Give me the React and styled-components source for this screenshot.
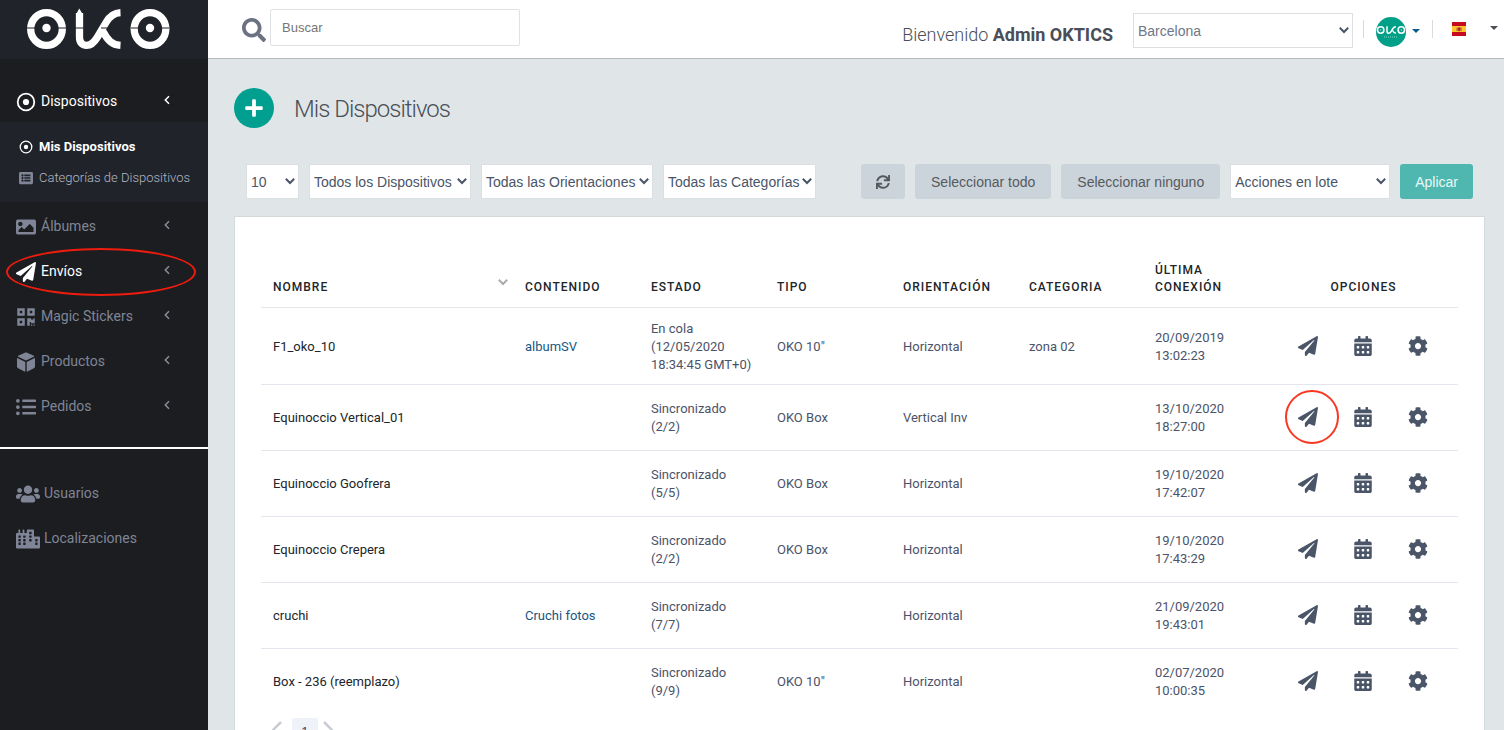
import React from 'react';
import styled, { createGlobalStyle, css } from 'styled-components';
import {
  FaSearch,
  FaImage,
  FaPaperPlane,
  FaQrcode,
  FaListUl,
  FaUsers,
  FaCity,
  FaSync,
  FaCalendarAlt,
  FaCog,
  FaPlus,
  FaListAlt
} from 'react-icons/fa';

const GlobalStyle = createGlobalStyle`
  * {
    box-sizing: border-box;
  }

  body {
    margin: 0;
    background: #e0e6e8;
    color: #4b5369;
    font-family: Roboto, "Liberation Sans", sans-serif;
    font-size: 13px;
    overflow: hidden;
  }

  a {
    color: inherit;
    text-decoration: none;
  }

  button, input, select {
    font-family: "Liberation Sans", Arial, sans-serif;
    font-size: 14px;
  }
`;

const Page = styled.div`
  display: flex;
  height: 100vh;
  overflow: hidden;
`;

const SidebarContainer = styled.aside`
  width: 208px;
  flex: none;
  background: #1c1d20;
`;

const LogoLink = styled.a`
  display: flex;
  justify-content: center;
  height: 59px;
  padding: 8px 11px 0 0;
  background: #20232a;

  svg {
    color: #ffffff;
  }
`;

const NavList = styled.ul`
  list-style: none;
  margin: 0;
  padding: ${(props) => props.$top} 0 19px;
  border-bottom: ${(props) => (props.$divided ? '2px solid #ffffff' : 'none')};
`;

const NavItem = styled.a`
  display: flex;
  align-items: center;
  gap: ${(props) => (props.$wide ? '4px' : '5px')};
  height: 45px;
  padding: 0 38px 0 16px;
  color: ${(props) => (props.$active ? '#ffffff' : '#7f8596')};
  font-size: 14px;

  > svg:first-child {
    width: ${(props) => (props.$wide ? '24px' : '20px')};
    height: ${(props) => (props.$wide ? '24px' : '20px')};
    margin-top: 2px;
  }
`;

const Arrow = styled.svg`
  margin: 0 0 1px auto;
  color: ${(props) => (props.$bright ? '#ffffff' : '#8b8e96')};
`;

const SubMenu = styled.ul`
  list-style: none;
  margin: -1px 0 1px;
  padding: 9px 0;
  background: #20232a;
`;

const SubItem = styled.a`
  display: flex;
  align-items: center;
  height: 31px;
  padding-left: 19px;
  gap: 6px;
  font-size: 13px;
  font-weight: 300;
  color: #b3b7c2;

  svg {
    color: #7f8596;
    font-size: 14px;
  }

  ${(props) => props.$active && css`
    color: #ffffff;
    font-weight: 700;

    svg {
      color: #ffffff;
    }
  `}
`;

const Highlight = styled.span`
  position: absolute;
  pointer-events: none;
  border: 2px solid ${(props) => props.$color};
  border-radius: 50%;
`;

const MenuHighlight = styled(Highlight)`
  top: 0;
  left: 6px;
  right: 12px;
  height: 48px;
`;

const RowHighlight = styled(Highlight)`
  width: 54px;
  height: 54px;
  left: -13px;
  top: -17px;
`;

const NavEntry = styled.li`
  position: relative;
`;

const Main = styled.main`
  flex: 1;
  min-width: 0;
`;

const Header = styled.header`
  display: flex;
  align-items: center;
  height: 59px;
  padding: 3px 6px 0 34px;
  background: #ffffff;
  border-bottom: 1px solid #b5b8bb;
`;

const SearchForm = styled.form`
  display: flex;
  align-items: center;
  gap: 4px;
  margin: 0 auto 6px 0;

  svg {
    font-size: 24px;
    margin-top: 4px;
    color: #6d7283;
  }
`;

const SearchInput = styled.input`
  width: 250px;
  height: 37px;
  padding: 0 11px;
  border: 1px solid #dfe2e4;
  border-radius: 2px;
  color: #4b5369;
  font-size: 13px;

  &::placeholder {
    color: #757575;
  }
`;

const Welcome = styled.span`
  margin: 8px 20px 0 0;
  color: #4a4e57;
  font-size: 18px;
  font-weight: 300;

  strong {
    font-weight: 700;
  }
`;

const SelectBox = styled.span`
  position: relative;
  display: inline-flex;
  flex: none;
  width: ${(props) => props.$width};
  color: #4a5568;

  svg {
    position: absolute;
    right: 3px;
    top: 12px;
    pointer-events: none;
  }
`;

const Select = styled.select`
  appearance: none;
  width: 100%;
  height: 35px;
  padding: 0 4px;
  border: 1px solid #dcdfe1;
  border-radius: 0;
  background: #ffffff;
  color: ${(props) => (props.$muted ? '#6f7888' : '#4a5568')};
`;

const HeaderMenu = styled.button`
  display: flex;
  align-items: center;
  gap: ${(props) => props.$gap};
  height: 30px;
  padding: 0;
  border: none;
  background: none;
  color: ${(props) => props.$color};
`;

const AccountMenu = styled(HeaderMenu)`
  margin-top: 3px;
`;

const LanguageMenu = styled(HeaderMenu)`
  margin-bottom: 3px;
`;

const Separator = styled.span`
  width: 1px;
  height: 18px;
  margin: 0 ${(props) => props.$right} 3px ${(props) => props.$left};
  background: #d9dcde;
`;

const Content = styled.section`
  padding: 29px 19px 0 26px;
`;

const TitleRow = styled.div`
  display: flex;
  align-items: center;
  gap: 20px;

  h1 {
    margin: 2px 0 0;
    color: #4a4e57;
    font-size: 24px;
    font-weight: 300;
    letter-spacing: -1px;
  }
`;

const AddButton = styled.button`
  display: flex;
  align-items: center;
  justify-content: center;
  width: 40px;
  height: 40px;
  padding: 0;
  border: none;
  border-radius: 50%;
  background: #009f8f;
  color: #ffffff;

  svg {
    font-size: 20px;
  }
`;

const Toolbar = styled.div`
  display: flex;
  gap: 10px;
  margin: 36px 12px 17px 12px;
`;

const Batch = styled.div`
  display: flex;
  gap: 10px;
  margin-left: auto;
`;

const Button = styled.button`
  display: flex;
  align-items: center;
  height: 35px;
  padding: 0 ${(props) => (props.$text ? '16px' : '15px')};
  border: none;
  border-radius: 3px;
  background: ${(props) => (props.$primary ? '#4fb7b0' : '#cbd4da')};
  color: ${(props) => (props.$primary ? '#e9f7f6' : '#555a5f')};
`;

const Card = styled.div`
  padding: 30px 26px 40px;
  background: #ffffff;
  border: 1px solid #d4d9db;
`;

const Table = styled.table`
  width: 100%;
  border-collapse: collapse;
  table-layout: fixed;
`;

const Th = styled.th`
  height: 60px;
  padding: 0 ${(props) => (props.$sortable ? '4px' : '12px')} 11px 12px;
  border-bottom: 1px solid #e4e6ea;
  color: #212529;
  font-size: 12px;
  font-weight: 500;
  line-height: 17px;
  letter-spacing: 1px;
  text-align: ${(props) => (props.$center ? 'center' : 'left')};
  vertical-align: bottom;
`;

const SortLabel = styled.span`
  display: flex;
  justify-content: space-between;
  align-items: center;

  svg {
    margin-top: -10px;
    color: #a9abae;
  }
`;

const Td = styled.td`
  height: 66px;
  padding: 12px 12px 10px;
  color: ${(props) => (props.$strong ? '#212529' : '#4b5369')};
  font-size: 13px;
  line-height: 18px;

  tr:not(:last-child) > & {
    border-bottom: 1px solid #e4e6ed;
  }
`;

const ContentLink = styled.a`
  color: #175783;
`;

const Options = styled.div`
  display: flex;
  justify-content: center;
  gap: 35px;
  padding-bottom: 2px;
`;

const IconButton = styled.button`
  position: relative;
  display: flex;
  justify-content: center;
  width: 20px;
  padding: 0;
  border: none;
  background: none;
  color: #4a5568;
  font-size: 20px;
`;

const Pagination = styled.nav`
  display: flex;
  gap: 5px;
  margin: 4px 0 0 11px;
`;

const PageButton = styled.button`
  height: 27px;
  padding: 0;
  border: none;
  background: none;
  color: #c9ccd2;
`;

const CurrentPage = styled(PageButton)`
  width: 26px;
  margin-left: 5px;
  border-radius: 2px;
  background: #eff2f8;
  color: #4b5369;
`;

const DotCircle = ({ size = 20 }) => (
  <svg width={size} height={size} viewBox="0 0 20 20" fill="none" aria-hidden="true">
    <circle cx="10" cy="10" r="8.3" stroke="currentColor" strokeWidth="1.8" />
    <circle cx="10" cy="10" r="3.1" fill="currentColor" />
  </svg>
);

const Cube = () => (
  <svg width="20" height="20" viewBox="0 0 20 20" fill="currentColor" aria-hidden="true">
    <path d="M10 .5c.4 0 .8.1 1.200.300l6.600 3c.5.2.5.800 0 1L10 8.500 2.200 4.800c-.5-.2-.5-.8 0-1l6.600-3C9.200.6 9.600.5 10 .5z" />
    <path d="M1.300 6.100 9.300 9.900v9.300c0 .4-.4.600-.8.4l-6.400-3.400c-.7-.4-1.100-1-1.100-1.800V6.400c0-.2.1-.4.3-.3z" />
    <path d="m18.700 6.100-8 3.800v9.300c0 .4.4.6.8.4l6.400-3.400c.7-.4 1.100-1 1.100-1.800V6.400c0-.2-.1-.4-.3-.3z" />
  </svg>
);

const Chevron = () => (
  <svg width="12" height="10" viewBox="0 0 12 10" fill="none" aria-hidden="true">
    <path d="M1.8 2.8 6 7l4.2-4.2" stroke="currentColor" strokeWidth="2" />
  </svg>
);

const Caret = styled.svg.attrs({
  width: 8,
  height: 4,
  viewBox: '0 0 8 4',
  children: <path d="M0 0h8L4 4z" fill="currentColor" />
})`
  margin-bottom: 3px;
`;

const LogoMark = ({ width, height }) => (
  <svg width={width} height={height} viewBox="0 0 144 42" fill="none" role="img" aria-label="OKO">
    <g stroke="currentColor" strokeWidth="7.3">
      <ellipse cx="19.5" cy="21" rx="15.8" ry="16.4" />
      <ellipse cx="123" cy="21" rx="15.8" ry="16.4" />
      <path d="M52.500 5v24c0 5.500 2.500 8.400 7 8.400 4.500 0 8-3.400 11-8.400l8.500-14.500c3.500-6 7.500-9.500 14.500-9.800" />
      <path d="M76 23.500c4.500 8.500 9 13.400 17.500 13.900" />
    </g>
    <path d="M48.800 7 52.200.5 56.200 7z" fill="currentColor" />
    <circle cx="19.500" cy="20" r="4.200" fill="currentColor" />
    <circle cx="123" cy="20" r="4.200" fill="currentColor" />
    <path d="M0 20h10M29 20h10M48 20h9M74 20h9M104 20h10M132 20h10" stroke="#20232a" />
  </svg>
);

const Avatar = () => (
  <svg width="30" height="30" viewBox="0 0 30 30" fill="none" role="img" aria-label="Admin OKTICS">
    <circle cx="15" cy="15" r="15" fill="#00a088" />
    <g stroke="#ffffff" strokeWidth="1.5">
      <circle cx="4.700" cy="13" r="3.200" />
      <circle cx="25.300" cy="13" r="3.200" />
      <path d="M11 9.300v4.700c0 3 2.700 2.900 4.200.4l1.600-2.800c.7-1.200 1.600-1.900 3.100-1.900M16.500 13.500c.9 1.700 1.900 2.700 3.500 2.700" />
    </g>
    <path d="M4.200 13h1M24.800 13h1" stroke="#ffffff" />
    <path d="M8 20h14" stroke="#8fd6cb" strokeDasharray="1 1" />
  </svg>
);

const SpanishFlag = () => (
  <svg width="14" height="14" viewBox="0 0 14 14" role="img" aria-label="Español">
    <path d="M0 0h14v14H0z" fill="#c60b1e" />
    <path d="M0 4h14v6H0z" fill="#ffc42c" />
    <path d="M4.500 5.500h1V9h-1zM8.700 5.500h1V9h-1z" fill="#b56a45" />
    <path d="M5.500 6h3.200v2.200L7.100 9.500 5.500 8.200z" fill="#ad3030" />
    <path d="M6 5h2.300v1H6z" fill="#b56a45" />
  </svg>
);

const NavArrow = ({ bright }) => (
  <Arrow $bright={bright} width="6" height="10" viewBox="0 0 6 10" fill="none" aria-hidden="true">
    <path d="M5 1.300 1.300 5 5 8.700" stroke="currentColor" strokeWidth="1.500" />
  </Arrow>
);

const Dropdown = ({ label, value, width, muted }) => (
  <SelectBox $width={width}>
    <Select aria-label={label} $muted={muted} defaultValue={value}>
      <option>{value}</option>
    </Select>
    <Chevron />
  </SelectBox>
);

const sections = [
  { label: 'Álbumes', icon: FaImage },
  { label: 'Envíos', icon: FaPaperPlane, active: true, marked: true },
  { label: 'Magic Stickers', icon: FaQrcode },
  { label: 'Productos', icon: Cube },
  { label: 'Pedidos', icon: FaListUl }
];

const devices = [
  { name: 'F1_oko_10', content: 'albumSV', state: 'En cola (12/05/2020 18:34:45 GMT+0)', type: 'OKO 10"', orientation: 'Horizontal', category: 'zona 02', last: '20/09/2019 13:02:23' },
  { name: 'Equinoccio Vertical_01', state: 'Sincronizado (2/2)', type: 'OKO Box', orientation: 'Vertical Inv', last: '13/10/2020 18:27:00', marked: true },
  { name: 'Equinoccio Goofrera', state: 'Sincronizado (5/5)', type: 'OKO Box', orientation: 'Horizontal', last: '19/10/2020 17:42:07' },
  { name: 'Equinoccio Crepera', state: 'Sincronizado (2/2)', type: 'OKO Box', orientation: 'Horizontal', last: '19/10/2020 17:43:29' },
  { name: 'cruchi', content: 'Cruchi fotos', state: 'Sincronizado (7/7)', orientation: 'Horizontal', last: '21/09/2020 19:43:01' },
  { name: 'Box - 236 (reemplazo)', state: 'Sincronizado (9/9)', type: 'OKO 10"', orientation: 'Horizontal', last: '02/07/2020 10:00:35' }
];

const Sidebar = () => (
  <SidebarContainer>
    <LogoLink href="#">
      <LogoMark width={144} height={42} />
    </LogoLink>

    <NavList $top="19px" $divided>
      <li>
        <NavItem href="#" $active>
          <DotCircle />
          Dispositivos
          <NavArrow bright />
        </NavItem>
        <SubMenu>
          <li>
            <SubItem href="#" $active>
              <DotCircle size={14} />
              Mis Dispositivos
            </SubItem>
          </li>
          <li>
            <SubItem href="#">
              <FaListAlt />
              Categorías de Dispositivos
            </SubItem>
          </li>
        </SubMenu>
      </li>
      {sections.map(({ label, icon: Icon, active, marked }) => (
        <NavEntry key={label}>
          <NavItem href="#" $active={active}>
            <Icon />
            {label}
            <NavArrow />
          </NavItem>
          {marked && <MenuHighlight $color="#ee1c0e" />}
        </NavEntry>
      ))}
    </NavList>

    <NavList $top="21px">
      <li>
        <NavItem href="#" $wide>
          <FaUsers />
          Usuarios
        </NavItem>
      </li>
      <li>
        <NavItem href="#" $wide>
          <FaCity />
          Localizaciones
        </NavItem>
      </li>
    </NavList>
  </SidebarContainer>
);

const App = () => (
  <Page>
    <GlobalStyle />
    <Sidebar />
    <Main>
      <Header>
        <SearchForm>
          <FaSearch />
          <SearchInput type="text" placeholder="Buscar" aria-label="Buscar" />
        </SearchForm>
        <Welcome>
          Bienvenido <strong>Admin OKTICS</strong>
        </Welcome>
        <Dropdown label="Localización" value="Barcelona" width="220px" muted />
        <Separator $left="10px" $right="12px" />
        <AccountMenu $gap="6px" $color="#0b5a8c" aria-label="Cuenta">
          <Avatar />
          <Caret />
        </AccountMenu>
        <Separator $left="12px" $right="19px" />
        <LanguageMenu $gap="24px" $color="#4a4e57" aria-label="Idioma">
          <SpanishFlag />
          <Caret />
        </LanguageMenu>
      </Header>

      <Content>
        <TitleRow>
          <AddButton aria-label="Añadir dispositivo">
            <FaPlus />
          </AddButton>
          <h1>Mis Dispositivos</h1>
        </TitleRow>

        <Toolbar>
          <Dropdown label="Filas" value="10" width="53px" />
          <Dropdown label="Dispositivos" value="Todos los Dispositivos" width="162px" />
          <Dropdown label="Orientaciones" value="Todas las Orientaciones" width="172px" />
          <Dropdown label="Categorías" value="Todas las Categorías" width="153px" />
          <Batch>
            <Button aria-label="Recargar">
              <FaSync />
            </Button>
            <Button $text>Seleccionar todo</Button>
            <Button $text>Seleccionar ninguno</Button>
            <Dropdown label="Acciones" value="Acciones en lote" width="160px" />
            <Button $primary>Aplicar</Button>
          </Batch>
        </Toolbar>

        <Card>
          <Table>
            <colgroup>
              <col width="20%" />
              <col span="6" width="10%" />
              <col width="15%" />
            </colgroup>
            <thead>
              <tr>
                <Th $sortable>
                  <SortLabel>
                    NOMBRE
                    <Chevron />
                  </SortLabel>
                </Th>
                <Th>CONTENIDO</Th>
                <Th>ESTADO</Th>
                <Th>TIPO</Th>
                <Th>ORIENTACIÓN</Th>
                <Th>CATEGORIA</Th>
                <Th>ÚLTIMA CONEXIÓN</Th>
                <Th $center>OPCIONES</Th>
              </tr>
            </thead>
            <tbody>
              {devices.map((device) => (
                <tr key={device.name}>
                  <Td $strong>{device.name}</Td>
                  <Td>{device.content && <ContentLink href="#">{device.content}</ContentLink>}</Td>
                  <Td>{device.state}</Td>
                  <Td>{device.type}</Td>
                  <Td>{device.orientation}</Td>
                  <Td>{device.category}</Td>
                  <Td>{device.last}</Td>
                  <Td>
                    <Options>
                      <IconButton aria-label="Enviar">
                        <FaPaperPlane />
                        {device.marked && <RowHighlight $color="#f93822" />}
                      </IconButton>
                      <IconButton aria-label="Programar">
                        <FaCalendarAlt />
                      </IconButton>
                      <IconButton aria-label="Configurar">
                        <FaCog />
                      </IconButton>
                    </Options>
                  </Td>
                </tr>
              ))}
            </tbody>
          </Table>

          <Pagination aria-label="Paginación">
            <PageButton aria-label="Anterior">
              <svg width="10" height="18" viewBox="0 0 10 18" fill="none" aria-hidden="true">
                <path d="M9 1 1 9l8 8" stroke="currentColor" strokeWidth="2.500" />
              </svg>
            </PageButton>
            <CurrentPage>1</CurrentPage>
            <PageButton aria-label="Siguiente">
              <svg width="10" height="18" viewBox="0 0 10 18" fill="none" aria-hidden="true">
                <path d="m1 1 8 8-8 8" stroke="currentColor" strokeWidth="2.500" />
              </svg>
            </PageButton>
          </Pagination>
        </Card>
      </Content>
    </Main>
  </Page>
);

export default App;
